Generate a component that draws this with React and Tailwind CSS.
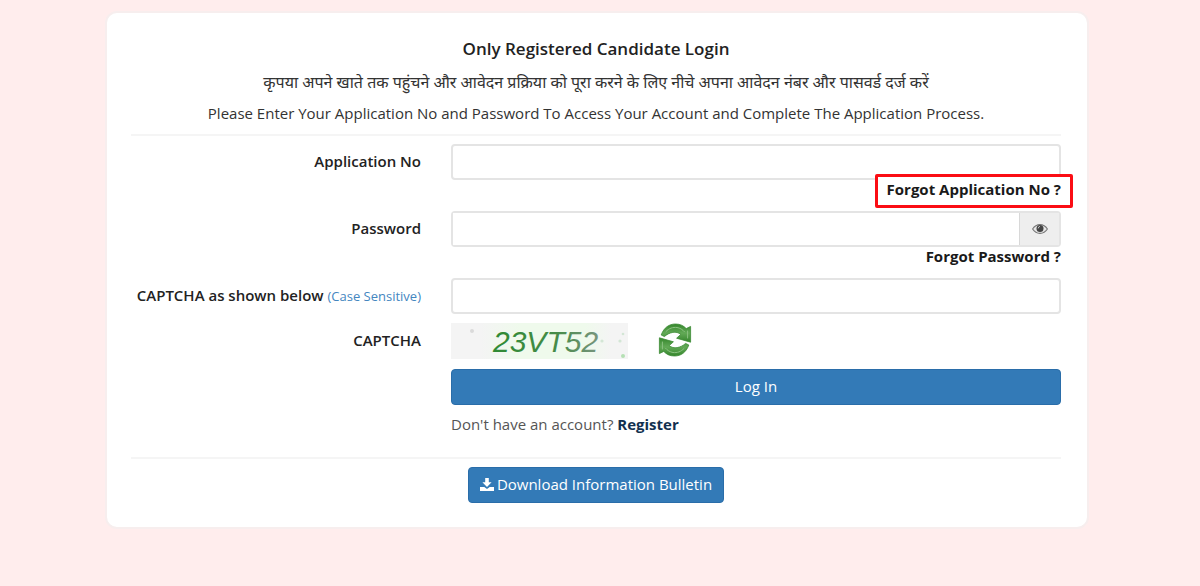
import React from "react";

function EyeIcon() {
  return (
    <svg viewBox="0 0 16 10" className="h-[10px] w-4" aria-hidden="true">
      <path
        d="M0.6 5 C2.6 1.9 5 0.6 8 0.6 C11 0.6 13.4 1.9 15.4 5 C13.4 8.1 11 9.4 8 9.4 C5 9.4 2.6 8.1 0.6 5 Z"
        fill="#e6e6e6"
        stroke="#777"
        strokeWidth="1.1"
      />
      <circle cx="8" cy="4.4" r="3.5" fill="#444" />
      <path d="M6.2 4.4 A2 2 0 0 1 8 2.4" fill="none" stroke="#ccc" strokeWidth="0.9" />
    </svg>
  );
}

function DownloadIcon() {
  return (
    <svg viewBox="0 0 14 13" className="h-[13px] w-[14px]" aria-hidden="true">
      <path d="M5.2 0 H8.8 V4.3 H11.6 L7 9 L2.4 4.3 H5.2 Z" fill="#fff" />
      <path d="M0 9 H4.3 L7 11 L9.7 9 H14 V13 H0 Z" fill="#fff" />
    </svg>
  );
}

function RefreshIcon() {
  return (
    <svg viewBox="0 0 34 34" className="h-[34px] w-[34px]" aria-hidden="true">
      <defs>
        <linearGradient id="leaf" x1="0" y1="0" x2="0" y2="1">
          <stop offset="0" stopColor="#35862c" />
          <stop offset="0.5" stopColor="#62a956" />
          <stop offset="1" stopColor="#35862c" />
        </linearGradient>
      </defs>
      <g fill="url(#leaf)" stroke="#3b8a34" strokeWidth="0.8" strokeLinejoin="round">
        <path d="M3.2 12 C6 4.5 11 1 17.5 1 C22 1 25.5 2.6 28.2 5.6 L32.6 3.4 V19.2 L18.6 15.2 L22.8 11.4 C20.6 9.6 17.8 8.8 14.8 9.4 C11.5 10 8.8 11.4 6.4 13.6 Z" />
        <path d="M30.8 22 C28 29.5 23 33 16.5 33 C12 33 8.5 31.4 5.8 28.4 L1.4 30.6 V14.8 L15.4 18.8 L11.2 22.6 C13.4 24.4 16.2 25.2 19.2 24.6 C22.5 24 25.2 22.6 27.6 20.4 Z" />
      </g>
      <g fill="none" stroke="#8cc282" strokeWidth="1" strokeLinecap="round">
        <path d="M8 8.5 C11 5.2 15 4 19 4.5 C22 5 24.5 6.5 26.5 8.8 M29.6 8 V15" />
        <path d="M26 25.5 C23 28.8 19 30 15 29.5 C12 29 9.5 27.5 7.5 25.2 M4.4 26 V19" />
      </g>
    </svg>
  );
}

function CaptchaImage() {
  return (
    <svg
      viewBox="0 0 177 36"
      className="h-9 w-[177px] bg-[#f4f4f4]"
      role="img"
      aria-label="CAPTCHA code"
    >
      <defs>
        <linearGradient id="ink" x1="0" y1="0" x2="1" y2="0">
          <stop offset="0" stopColor="#2f8a34" />
          <stop offset="0.6" stopColor="#458b48" />
          <stop offset="1" stopColor="#78957e" />
        </linearGradient>
        <linearGradient id="wash" x1="0" y1="0" x2="1" y2="0">
          <stop offset="0" stopColor="#f4f4f4" />
          <stop offset="0.3" stopColor="#effaec" />
          <stop offset="0.8" stopColor="#effaec" />
          <stop offset="1" stopColor="#f4f4f4" />
        </linearGradient>
      </defs>
      <rect x="30" y="0" width="130" height="36" fill="url(#wash)" />
      <text
        x="42"
        y="29"
        fill="url(#ink)"
        fontSize="30"
        fontStyle="italic"
        fontFamily="'Liberation Sans', sans-serif"
      >
        23VT52
      </text>
      <g fill="#d3e6d5">
        <circle cx="21" cy="8" r="2" fill="#dadada" />
        <circle cx="151" cy="18" r="1.6" />
        <circle cx="169" cy="18" r="1.6" />
        <circle cx="172" cy="11" r="1.3" />
        <circle cx="172" cy="33" r="2" fill="#b5e0b4" />
      </g>
    </svg>
  );
}

const row = "grid grid-cols-[290px_minmax(0,1fr)] gap-x-[30px]";
const label = "pt-[7px] text-right text-[15px] leading-5 font-semibold text-[#222]";
const field =
  "block h-9 w-full rounded-[4px] border-2 border-[#e4e4e4] bg-white px-3 text-[15px] outline-none";
const link = "relative text-[15px] leading-[18px] font-bold text-[#1a1a1a]";

export default function App() {
  return (
    <div className="min-h-screen bg-[#ffeded] pt-[11px] pr-[111px] pb-14 pl-[105px] font-['Open_Sans','Noto_Sans',sans-serif]">
      <main className="rounded-xl border-2 border-[#f7eeee] bg-white py-6 pr-[26px] pl-6">
        <header className="border-b-2 border-[#f5f5f5] pb-[9px] text-center text-[#333]">
          <h1 className="text-[17px] leading-6 font-semibold text-[#222]">
            Only Registered Candidate Login
          </h1>
          <p className="mt-[9px] text-[16px] leading-6">
            कृपया अपने खाते तक पहुंचने और आवेदन प्रक्रिया को पूरा करने के लिए नीचे अपना आवेदन नंबर और पासवर्ड दर्ज करें
          </p>
          <p className="mt-[7px] text-[15px] leading-6">
            Please Enter Your Application No and Password To Access Your Account and Complete The Application Process.
          </p>
        </header>

        <form className="pt-2" onSubmit={(e) => e.preventDefault()}>
          <div className={row}>
            <label htmlFor="application" className={label}>
              Application No
            </label>
            <div className="pb-[13px]">
              <input id="application" type="text" className={field} />
              <div className="flex justify-end">
                <a href="#forgot-application" className={link}>
                  <span className="absolute -top-1.5 -right-3 -bottom-2.5 -left-3 rounded-[2px] border-3 border-[#fb0d14] bg-white" />
                  <span className="relative">Forgot Application No ?</span>
                </a>
              </div>
            </div>
          </div>

          <div className={row}>
            <label htmlFor="password" className={label}>
              Password
            </label>
            <div className="pb-[13px]">
              <div className="flex h-9 rounded-[4px] border-2 border-[#e4e4e4]">
                <input
                  id="password"
                  type="password"
                  className="min-w-0 flex-1 bg-white px-3 text-[15px] outline-none"
                />
                <button
                  type="button"
                  aria-label="Show password"
                  className="flex w-10 items-center justify-center border-l border-[#d8d8d8] bg-[#eee]"
                >
                  <EyeIcon />
                </button>
              </div>
              <div className="flex justify-end">
                <a href="#forgot-password" className={link}>
                  Forgot Password ?
                </a>
              </div>
            </div>
          </div>

          <div className={row}>
            <label htmlFor="captcha" className={label}>
              CAPTCHA as shown below{" "}
              <span className="text-[13px] font-normal text-[#4486bf]">(Case Sensitive)</span>
            </label>
            <input id="captcha" type="text" className={field} />
          </div>

          <div className={`${row} mt-[9px]`}>
            <span className={label}>CAPTCHA</span>
            <div className="flex items-start gap-[30px]">
              <CaptchaImage />
              <button type="button" aria-label="Refresh CAPTCHA">
                <RefreshIcon />
              </button>
            </div>
          </div>

          <div className={`${row} mt-[10px]`}>
            <div className="col-start-2">
              <button
                type="submit"
                className="block h-9 w-full rounded-[4px] border border-[#2a6da9] bg-[#337ab7] pb-0.5 text-[15px] text-white"
              >
                Log In
              </button>
              <p className="mt-[9px] text-[15px] leading-5 text-[#555]">
                Don't have an account?{" "}
                <a href="#register" className="font-bold text-[#12304f]">
                  Register
                </a>
              </p>
            </div>
          </div>
        </form>

        <div className="mt-[23px] flex justify-center border-t-2 border-[#f5f5f5] pt-2">
          <a
            href="#bulletin"
            className="flex h-9 items-center gap-[3px] rounded-[4px] border border-[#2a6da9] bg-[#337ab7] px-[11px] pb-0.5 text-[15px] text-white"
          >
            <DownloadIcon />
            Download Information Bulletin
          </a>
        </div>
      </main>
    </div>
  );
}
